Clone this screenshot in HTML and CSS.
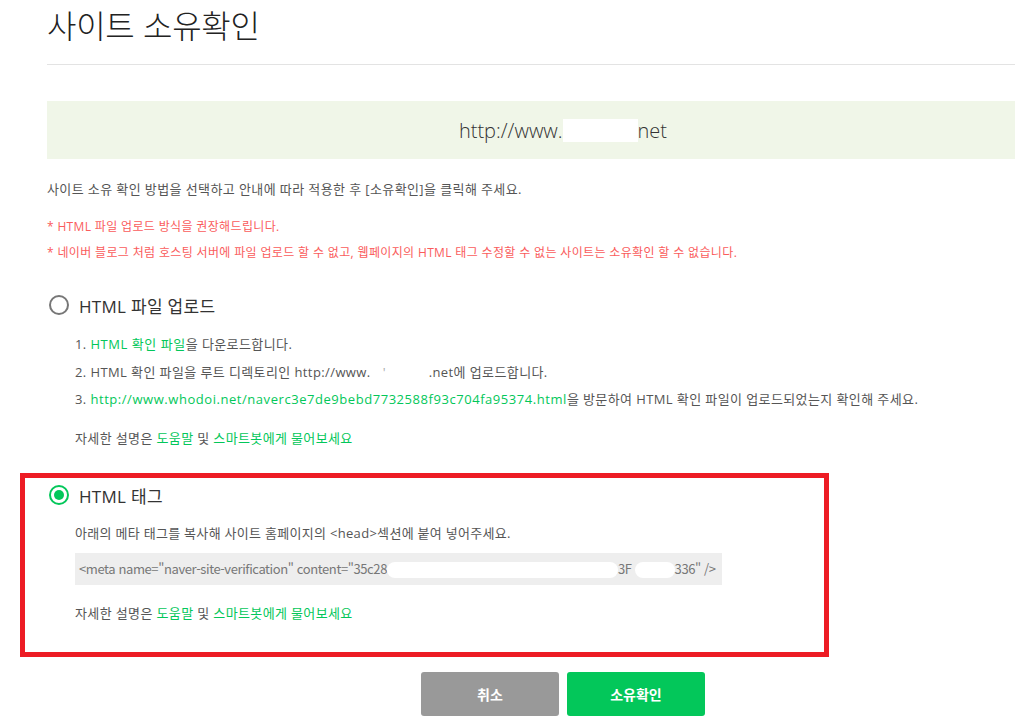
FILE: index.html
```html
<!DOCTYPE html>
<html lang="ko">
<head>
<meta charset="utf-8">
<title>사이트 소유확인</title>
<link rel="stylesheet" href="styles.css">
</head>
<body>
<div class="page">
  <h1 class="title">사이트 소유확인</h1>
  <div class="url-box"><span class="url">http://www.<span class="redact-url"></span>net</span></div>
  <p class="guide">사이트 소유 확인 방법을 선택하고 안내에 따라 적용한 후 [소유확인]을 클릭해 주세요.</p>
  <p class="warn">* HTML 파일 업로드 방식을 권장해드립니다.</p>
  <p class="warn">* 네이버 블로그 처럼 호스팅 서버에 파일 업로드 할 수 없고, 웹페이지의 HTML 태그 수정할 수 없는 사이트는 소유확인 할 수 없습니다.</p>

  <section class="method method-file">
    <div class="radio-row"><span class="radio"></span><span class="radio-label">HTML 파일 업로드</span></div>
    <ol class="steps">
      <li>1. <a class="link">HTML 확인 파일</a>을 다운로드합니다.</li>
      <li>2. HTML 확인 파일을 루트 디렉토리인 http://www.<span class="gap">&#39;</span>.net에 업로드합니다.</li>
      <li>3. <a class="link">http://www.whodoi.net/naverc3e7de9bebd7732588f93c704fa95374.html</a>을 방문하여 HTML 확인 파일이 업로드되었는지 확인해 주세요.</li>
    </ol>
    <p class="help">자세한 설명은 <a class="link">도움말</a> 및 <a class="link">스마트봇에게 물어보세요</a></p>
  </section>

  <section class="method method-tag">
    <div class="radio-row"><span class="radio checked"></span><span class="radio-label">HTML 태그</span></div>
    <p class="desc">아래의 메타 태그를 복사해 사이트 홈페이지의 &lt;head&gt;섹션에 붙여 넣어주세요.</p>
    <div class="code">&lt;meta name="naver-site-verification" content="35c28<span class="redact"></span>3F<span class="redact small"></span>336" /&gt;</div>
    <p class="help">자세한 설명은 <a class="link">도움말</a> 및 <a class="link">스마트봇에게 물어보세요</a></p>
  </section>

  <div class="actions">
    <button class="btn btn-cancel">취소</button>
    <button class="btn btn-ok">소유확인</button>
  </div>
</div>
</body>
</html>
```

FILE: styles.css
```css
html, body {
  margin: 0;
  padding: 0;
  overflow: hidden;
  background: #fff;
}
body {
  font-family: "Open Sans", "Noto Sans CJK KR", sans-serif;
  color: #555;
}
.page {
  width: 1032px;
  margin-left: 47px;
}
.title {
  margin: 0;
  padding: 4px 0 20px;
  font-family: "Noto Sans CJK KR", sans-serif;
  font-size: 32px;
  line-height: 40px;
  font-weight: 300;
  color: #222;
  border-bottom: 1px solid #e3e3e3;
  letter-spacing: -0.3px;
}
.url-box {
  margin-top: 36px;
  height: 58px;
  background: #f0f6e8;
  display: flex;
  align-items: center;
  justify-content: center;
}
.url {
  font-family: "Open Sans", sans-serif;
  font-weight: 300;
  font-size: 20px;
  color: #333;
  display: flex;
  align-items: center;
}
.redact-url {
  display: inline-block;
  width: 75px;
  height: 23px;
  background: #fff;
}
.guide {
  margin: 20px 0 0;
  font-size: 13px;
  line-height: 20px;
  color: #555;
  letter-spacing: 0.4px;
}
.warn {
  margin: 18px 0 0;
  font-size: 12px;
  line-height: 20px;
  color: #fa5c5c;
  letter-spacing: 0.35px;
}
.warn + .warn {
  margin-top: 6px;
}
.method-file {
  margin-top: 30px;
}
.radio-row {
  display: flex;
  align-items: center;
  height: 24px;
}
.radio {
  box-sizing: border-box;
  width: 20px;
  height: 20px;
  margin-left: 2px;
  border: 2px solid #777;
  border-radius: 50%;
  display: flex;
  align-items: center;
  justify-content: center;
}
.radio.checked {
  border-color: #03c75a;
}
.radio.checked::after {
  content: "";
  width: 10px;
  height: 10px;
  border-radius: 50%;
  background: #03c75a;
}
.radio-label {
  margin-left: 10px;
  font-size: 17px;
  color: #333;
  letter-spacing: 0.3px;
}
.steps {
  list-style: none;
  margin: 17px 0 0;
  padding: 0 0 0 28px;
}
.steps li {
  font-size: 13px;
  line-height: 20px;
  color: #555;
  letter-spacing: 0.4px;
}
.steps li + li {
  margin-top: 7.5px;
}
.steps .link {
  letter-spacing: 0.55px;
}
.link {
  color: #03c75a;
  text-decoration: none;
}
.gap {
  display: inline-block;
  width: 58px;
  padding-left: 12px;
  box-sizing: border-box;
  color: #aaa;
  text-align: left;
}
.help {
  margin: 19px 0 0 28px;
  font-size: 13px;
  line-height: 20px;
  color: #555;
  letter-spacing: 0.37px;
}
.method-tag {
  margin: 25px 0 0 -27px;
  width: 777px;
  height: 169px;
  border: 5px solid #ed1c24;
  padding-left: 22px;
  padding-top: 5px;
  box-sizing: content-box;
}
.desc {
  margin: 16px 0 0 28px;
  font-size: 13px;
  line-height: 20px;
  color: #555;
  letter-spacing: 0.3px;
}
.code {
  margin: 10px 0 0 28px;
  width: 647px;
  height: 32px;
  box-sizing: border-box;
  background: #eee;
  padding-left: 4px;
  font-family: "Noto Sans CJK KR", sans-serif;
  font-size: 13px;
  line-height: 32px;
  color: #777;
  letter-spacing: -0.4px;
  white-space: nowrap;
  overflow: hidden;
}
.redact {
  display: inline-block;
  vertical-align: middle;
  width: 231px;
  height: 16px;
  background: #fff;
  border-radius: 8px;
}
.redact.small {
  width: 40px;
  margin-left: 3px;
}
.method-tag .help {
  margin-top: 18px;
}
.actions {
  margin-top: 15px;
  display: flex;
  justify-content: center;
  gap: 8px;
}
.btn {
  width: 138px;
  height: 44px;
  border: 0;
  border-radius: 3px;
  color: #fff;
  font-family: "Noto Sans CJK KR", sans-serif;
  font-size: 14px;
  font-weight: 700;
}
.btn-cancel {
  background: #999;
}
.btn-ok {
  background: #03c75a;
}
```
